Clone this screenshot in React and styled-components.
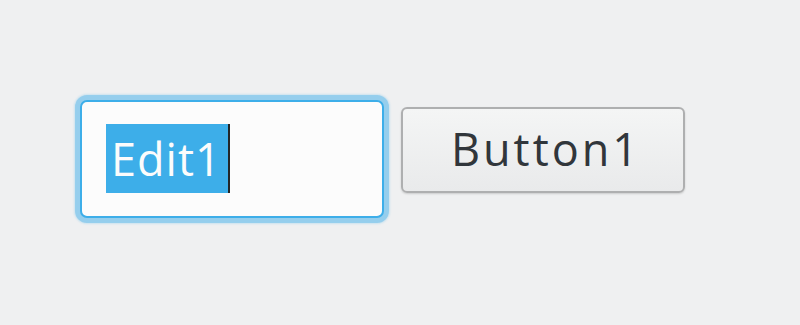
import React from 'react';
import styled, { createGlobalStyle } from 'styled-components';

const GlobalStyle = createGlobalStyle`
  html, body {
    margin: 0;
    padding: 0;
    background: #eff0f1;
    font-family: "Open Sans", "Noto Sans", sans-serif;
  }
`;

const Window = styled.div`
  width: 800px;
  height: 325px;
  box-sizing: border-box;
  padding: 100px 0 0 80px;
  display: flex;
  align-items: flex-start;
  gap: 17px;
  background: #eff0f1;
`;

const Edit = styled.div`
  width: 304px;
  height: 118px;
  box-sizing: border-box;
  border: 2px solid #3daee9;
  border-radius: 7px;
  background: #fcfcfc;
  box-shadow: 0 0 0 5px rgba(61, 174, 233, 0.38), 0 0 2px 6px rgba(61, 174, 233, 0.2);
  display: flex;
  align-items: center;
  padding: 0 0 2px 24px;
`;

const Selection = styled.span`
  display: inline-flex;
  align-items: center;
  height: 69px;
  padding: 0 0 0 5px;
  width: 124px;
  box-sizing: border-box;
  background: #3daee9;
  color: #fcfcfc;
  font-size: 45px;
  letter-spacing: 1px;
  line-height: 69px;
  border-right: 2px solid #232627;
`;

const Button = styled.button`
  margin-top: 7px;
  width: 284px;
  height: 86px;
  box-sizing: border-box;
  border: 2px solid #aeafb0;
  border-radius: 6px;
  background: linear-gradient(#f4f5f5, #e9eaeb);
  box-shadow: 0 1px 2px rgba(0, 0, 0, 0.15);
  color: #31363b;
  font-family: "Open Sans", "Noto Sans", sans-serif;
  font-size: 45px;
  letter-spacing: 3px;
  padding: 0 0 4px 6px;
`;

export default function App() {
  return (
    <>
      <GlobalStyle />
      <Window>
        <Edit>
          <Selection>Edit1</Selection>
        </Edit>
        <Button>Button1</Button>
      </Window>
    </>
  );
}
